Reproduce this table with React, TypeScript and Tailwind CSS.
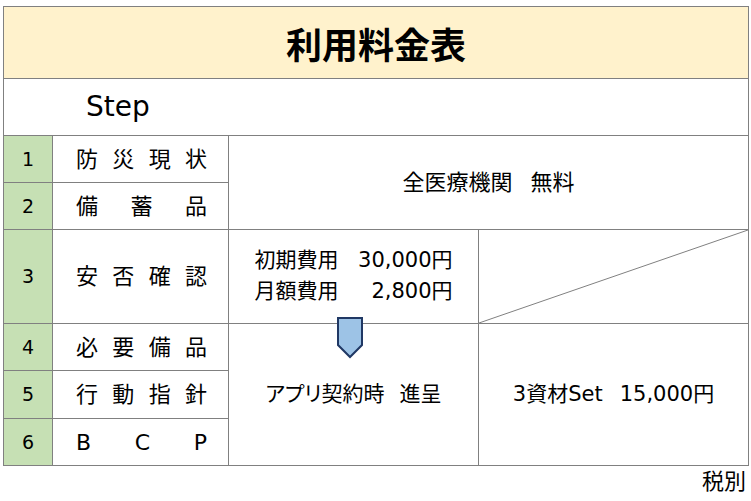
const font = "font-['DejaVu_Sans','Noto_Sans_CJK_JP',sans-serif]";

const labels: string[][] = [
  ["防", "災", "現", "状"],
  ["備", "蓄", "品"],
  ["安", "否", "確", "認"],
  ["必", "要", "備", "品"],
  ["行", "動", "指", "針"],
  ["B", "C", "P"],
];

const rowClass = [
  "row-start-1",
  "row-start-2",
  "row-start-3",
  "row-start-4",
  "row-start-5",
  "row-start-6",
];

function Arrow() {
  return (
    <svg width="28" height="42" viewBox="0 0 28 42" className="absolute left-[108px] top-[-7px]">
      <polygon points="1,1 25,1 25,28 13,40 1,28" fill="#9DC3E6" stroke="#203864" strokeWidth="2" strokeLinejoin="miter" />
    </svg>
  );
}

export default function App() {
  return (
    <div className={`w-[751px] h-[501px] bg-white text-black ${font}`}>
      <div className="pt-[6px] pl-[3px]">
        <div className="w-[746px] border border-[#808080]">
          <div className="h-[72px] bg-[#FFF2CC] border-b border-[#808080] flex items-center justify-center">
            <span className="text-[36px] font-bold leading-none font-['Noto_Sans_CJK_JP',sans-serif]">利用料金表</span>
          </div>
          <div className="h-[57px] border-b border-[#808080] flex items-center pl-[82px]">
            <span className="text-[28px] leading-none">Step</span>
          </div>
          <div className="grid grid-cols-[49px_176px_250px_269px] grid-rows-[47px_47px_94px_47px_48px_46px]">
            {labels.map((chars, i) => (
              <div key={"n" + i} className={`${rowClass[i]} col-start-1 bg-[#C6E0B4] border-r border-[#808080] ${i < 5 ? "border-b" : ""} flex items-center justify-center text-[19px]`}>
                {i + 1}
              </div>
            ))}
            {labels.map((chars, i) => (
              <div key={"l" + i} className={`${rowClass[i]} col-start-2 border-r border-[#808080] ${i < 5 ? "border-b" : ""} flex items-center justify-between pl-[23px] pr-[21px] text-[22px]`}>
                {chars.map((c, j) => (
                  <span key={j}>{c}</span>
                ))}
              </div>
            ))}
            <div className="row-start-1 row-span-2 col-start-3 col-span-2 border-b border-[#808080] flex items-center justify-center text-[22px]">
              全医療機関<span className="inline-block w-[18px]" />無料
            </div>
            <div className="row-start-3 col-start-3 border-r border-b border-[#808080] flex items-center justify-center text-[21px] leading-[31px]">
              <div className="w-[198px] pb-[2px]">
                <div className="flex justify-between">
                  <span>初期費用</span>
                  <span>30,000円</span>
                </div>
                <div className="flex justify-between">
                  <span>月額費用</span>
                  <span>2,800円</span>
                </div>
              </div>
            </div>
            <div className="row-start-3 col-start-4 border-b border-[#808080] relative">
              <svg className="absolute inset-0 w-full h-full" preserveAspectRatio="none" viewBox="0 0 100 100">
                <line x1="0" y1="100" x2="100" y2="0" stroke="#808080" strokeWidth="1" vectorEffect="non-scaling-stroke" />
              </svg>
            </div>
            <div className="row-start-4 row-span-3 col-start-3 border-r border-[#808080] relative flex items-center justify-center text-[21px]">
              <Arrow />
              <span className="flex items-center">
                <span className="[font-feature-settings:'palt']">アプリ</span>契約時<span className="inline-block w-[15px]" />進呈
              </span>
            </div>
            <div className="row-start-4 row-span-3 col-start-4 flex items-center justify-center text-[21px]">
              <span className="flex items-center">
                3資材Set<span className="inline-block w-[17px]" />15,000円
              </span>
            </div>
          </div>
        </div>
        <div className="w-[746px] flex justify-end pr-[3px] pt-[2px] text-[22px] leading-[28px]">税別</div>
      </div>
    </div>
  );
}
